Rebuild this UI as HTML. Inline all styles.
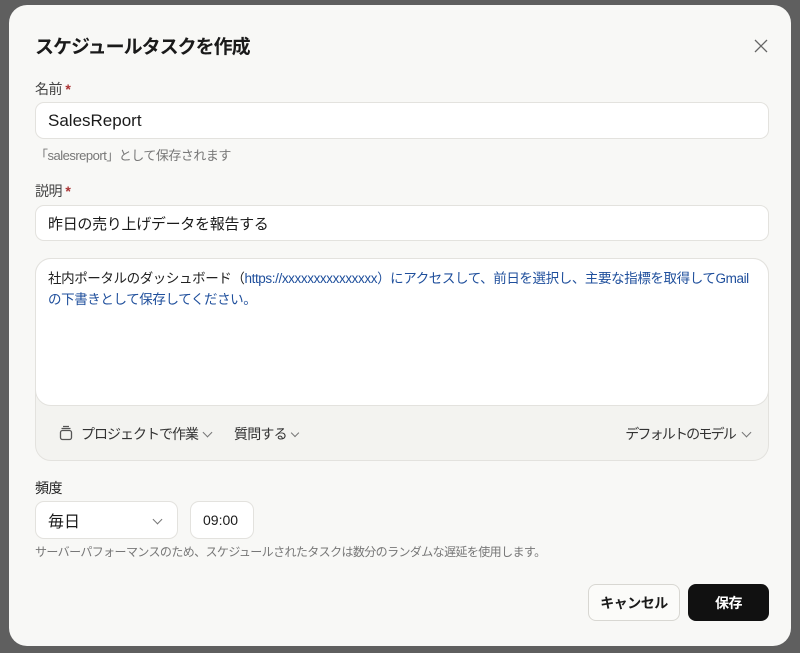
<!DOCTYPE html>
<html><head><meta charset="utf-8"><style>
*{box-sizing:border-box;margin:0;padding:0}
body{width:800px;height:653px;background:#5f5f5f;font-family:"Liberation Sans","Noto Sans CJK JP",sans-serif;overflow:hidden;position:relative;color:#1a1a1a}
.dlg{position:absolute;left:9px;top:5px;width:782px;height:641px;background:#f8f8f6;border-radius:18px}
.a{position:absolute}
h1{position:absolute;left:35px;top:32px;font-size:19px;font-weight:bold;letter-spacing:-1px}
.lbl{font-size:14px;color:#444;letter-spacing:-0.5px}
.inp{background:#fff;border:1px solid #e3e2de;border-radius:9px;font-size:16px;padding-left:12px;display:flex;align-items:center}
.star{color:#a33;font-weight:bold}
.small{font-size:12px;color:#777;letter-spacing:-0.6px}
.btn{border-radius:8px;font-size:14px;font-weight:bold;display:flex;align-items:center;justify-content:center;letter-spacing:-0.5px}
.chev{display:inline-block;width:7px;height:7px;border-right:1.2px solid #777;border-bottom:1.2px solid #777;transform:rotate(45deg);margin-left:8px;position:relative;top:-3px}
</style></head><body>
<div class="dlg"></div>
<h1>スケジュールタスクを作成</h1>
<svg class="a" style="left:754px;top:39px" width="14" height="14"><path d="M1 1L13 13M13 1L1 13" stroke="#666" stroke-width="1.3"/></svg>
<div class="a lbl" style="left:35px;top:79px">名前 <span class="star">*</span></div>
<div class="a inp" style="left:35px;top:102px;width:734px;height:37px;font-size:17px">SalesReport</div>
<div class="a lbl" style="left:35px;top:145px;font-size:13px;color:#777">「salesreport」として保存されます</div>
<div class="a lbl" style="left:35px;top:181px">説明 <span class="star">*</span></div>
<div class="a inp" style="left:35px;top:205px;width:734px;height:36px;font-size:15px;letter-spacing:-0.3px">昨日の売り上げデータを報告する</div>
<div class="a" style="left:35px;top:258px;width:734px;height:203px;background:#f3f3f0;border:1px solid #e3e2de;border-radius:16px"></div>
<div class="a" style="left:35px;top:258px;width:734px;height:148px;background:#fff;border:1px solid #e3e2de;border-radius:16px;padding:9px 12px;font-size:13.5px;line-height:21px;color:#1f4f9c;letter-spacing:-0.4px;white-space:nowrap"><span style="color:#222">社内ポータルのダッシュボード（</span>https://xxxxxxxxxxxxxxx）にアクセスして、前日を選択し、主要な指標を取得してGmail<br>の下書きとして保存してください。</div>
<svg class="a" style="left:58px;top:425px" width="16" height="16"><rect x="2.5" y="5.5" width="11" height="9" rx="2" fill="none" stroke="#555" stroke-width="1.3"/><path d="M3.5 3.5h9M5 1.5h6" stroke="#555" stroke-width="1.2"/></svg>
<div class="a" style="left:81px;top:424px;font-size:14px;color:#333;letter-spacing:-1px">プロジェクトで作業<span class="chev" style="margin-left:6px"></span></div>
<div class="a" style="left:234px;top:424px;font-size:14px;color:#333;letter-spacing:-0.8px">質問する<span class="chev" style="width:6px;height:6px;margin-left:5px"></span></div>
<div class="a" style="right:50px;top:424px;font-size:14px;color:#333;letter-spacing:-1.8px">デフォルトのモデル<span class="chev"></span></div>
<div class="a lbl" style="left:35px;top:478px;color:#222">頻度</div>
<div class="a inp" style="left:35px;top:501px;width:143px;height:38px">毎日<span class="chev" style="position:absolute;right:16px;top:14px"></span></div>
<div class="a inp" style="left:190px;top:501px;width:64px;height:38px;font-size:14px">09:00</div>
<div class="a small" style="left:35px;top:543px">サーバーパフォーマンスのため、スケジュールされたタスクは数分のランダムな遅延を使用します。</div>
<div class="a btn" style="left:588px;top:584px;width:92px;height:37px;background:#fbfbf9;border:1px solid #d8d7d2">キャンセル</div>
<div class="a btn" style="left:688px;top:584px;width:81px;height:37px;background:#111;color:#fff">保存</div>
</body></html>
